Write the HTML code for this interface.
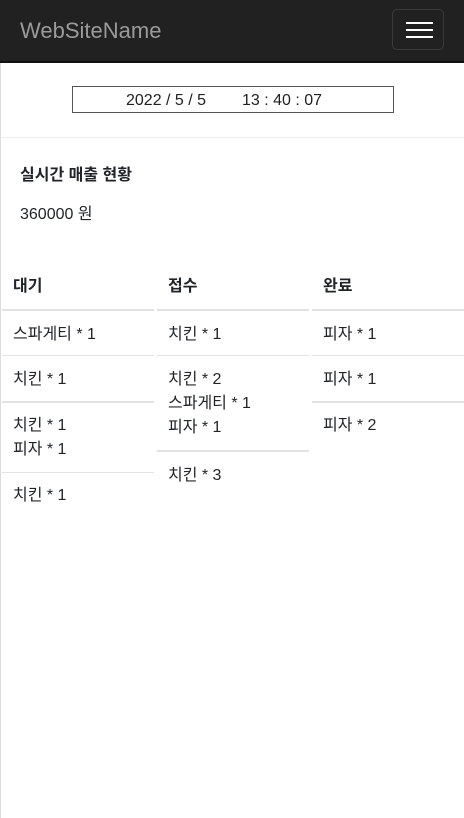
<!DOCTYPE html>
<html><head><meta charset="utf-8"><style>
body{margin:0;width:464px;height:818px;position:relative;background:#fff;font-family:"Liberation Sans","Noto Sans CJK KR",sans-serif;color:#212529;font-size:16px;overflow:hidden}
.nav{position:absolute;left:0;top:0;width:464px;height:61px;background:#212121;border-bottom:2px solid #111}
.brand{position:absolute;left:20px;top:18px;font-size:22px;color:#9a9a9a}
.tog{position:absolute;left:392px;top:9px;width:52px;height:41px;border:1px solid #3a3a3a;border-radius:5px;box-sizing:border-box}
.tog i{position:absolute;left:13px;width:27px;height:2px;background:#fff}
.lb{position:absolute;left:0;top:63px;width:1px;height:755px;background:#ddd}
.clock{position:absolute;left:72px;top:86px;width:322px;height:27px;box-sizing:border-box;border:1px solid #555}
.clock span{position:absolute;top:1px;line-height:25px;font-size:16px;color:#222;white-space:nowrap}
.hr{position:absolute;left:1px;top:137px;width:463px;height:1px;background:#eee}
.t{position:absolute;line-height:24px;white-space:nowrap}
.ln{position:absolute;height:2px;background:#e2e2e2}
</style></head><body>
<div class="nav"><div class="brand">WebSiteName</div><div class="tog"><i style="top:12px"></i><i style="top:19px"></i><i style="top:26px"></i></div></div>
<div class="lb"></div>
<div class="clock"><span style="left:53px">2022 / 5 / 5</span><span style="left:169px">13 : 40 : 07</span></div>
<div class="hr"></div>
<div class="t" style="left:20px;top:164px;font-weight:bold">실시간 매출 현황</div>
<div class="t" style="left:20px;top:203px">360000 원</div>

<div class="t" style="left:13px;top:275px;font-weight:bold">대기</div>
<div class="t" style="left:168px;top:275px;font-weight:bold">접수</div>
<div class="t" style="left:323px;top:275px;font-weight:bold">완료</div>
<div class="ln" style="left:2px;width:152px;top:309px"></div>
<div class="ln" style="left:157px;width:152px;top:309px"></div>
<div class="ln" style="left:312px;width:152px;top:309px"></div>

<div class="t" style="left:13px;top:323px">스파게티 * 1</div>
<div class="ln" style="left:2px;width:152px;top:355px;height:1px"></div>
<div class="t" style="left:13px;top:368px">치킨 * 1</div>
<div class="ln" style="left:2px;width:152px;top:401px"></div>
<div class="t" style="left:13px;top:414px">치킨 * 1<br>피자 * 1</div>
<div class="ln" style="left:2px;width:152px;top:472px;height:1px"></div>
<div class="t" style="left:13px;top:484px">치킨 * 1</div>

<div class="t" style="left:168px;top:323px">치킨 * 1</div>
<div class="ln" style="left:157px;width:152px;top:355px;height:1px"></div>
<div class="t" style="left:168px;top:368px">치킨 * 2<br>스파게티 * 1<br>피자 * 1</div>
<div class="ln" style="left:157px;width:152px;top:450px"></div>
<div class="t" style="left:168px;top:464px">치킨 * 3</div>

<div class="t" style="left:323px;top:323px">피자 * 1</div>
<div class="ln" style="left:312px;width:152px;top:355px;height:1px"></div>
<div class="t" style="left:323px;top:368px">피자 * 1</div>
<div class="ln" style="left:312px;width:152px;top:401px"></div>
<div class="t" style="left:323px;top:414px">피자 * 2</div>
</body></html>
